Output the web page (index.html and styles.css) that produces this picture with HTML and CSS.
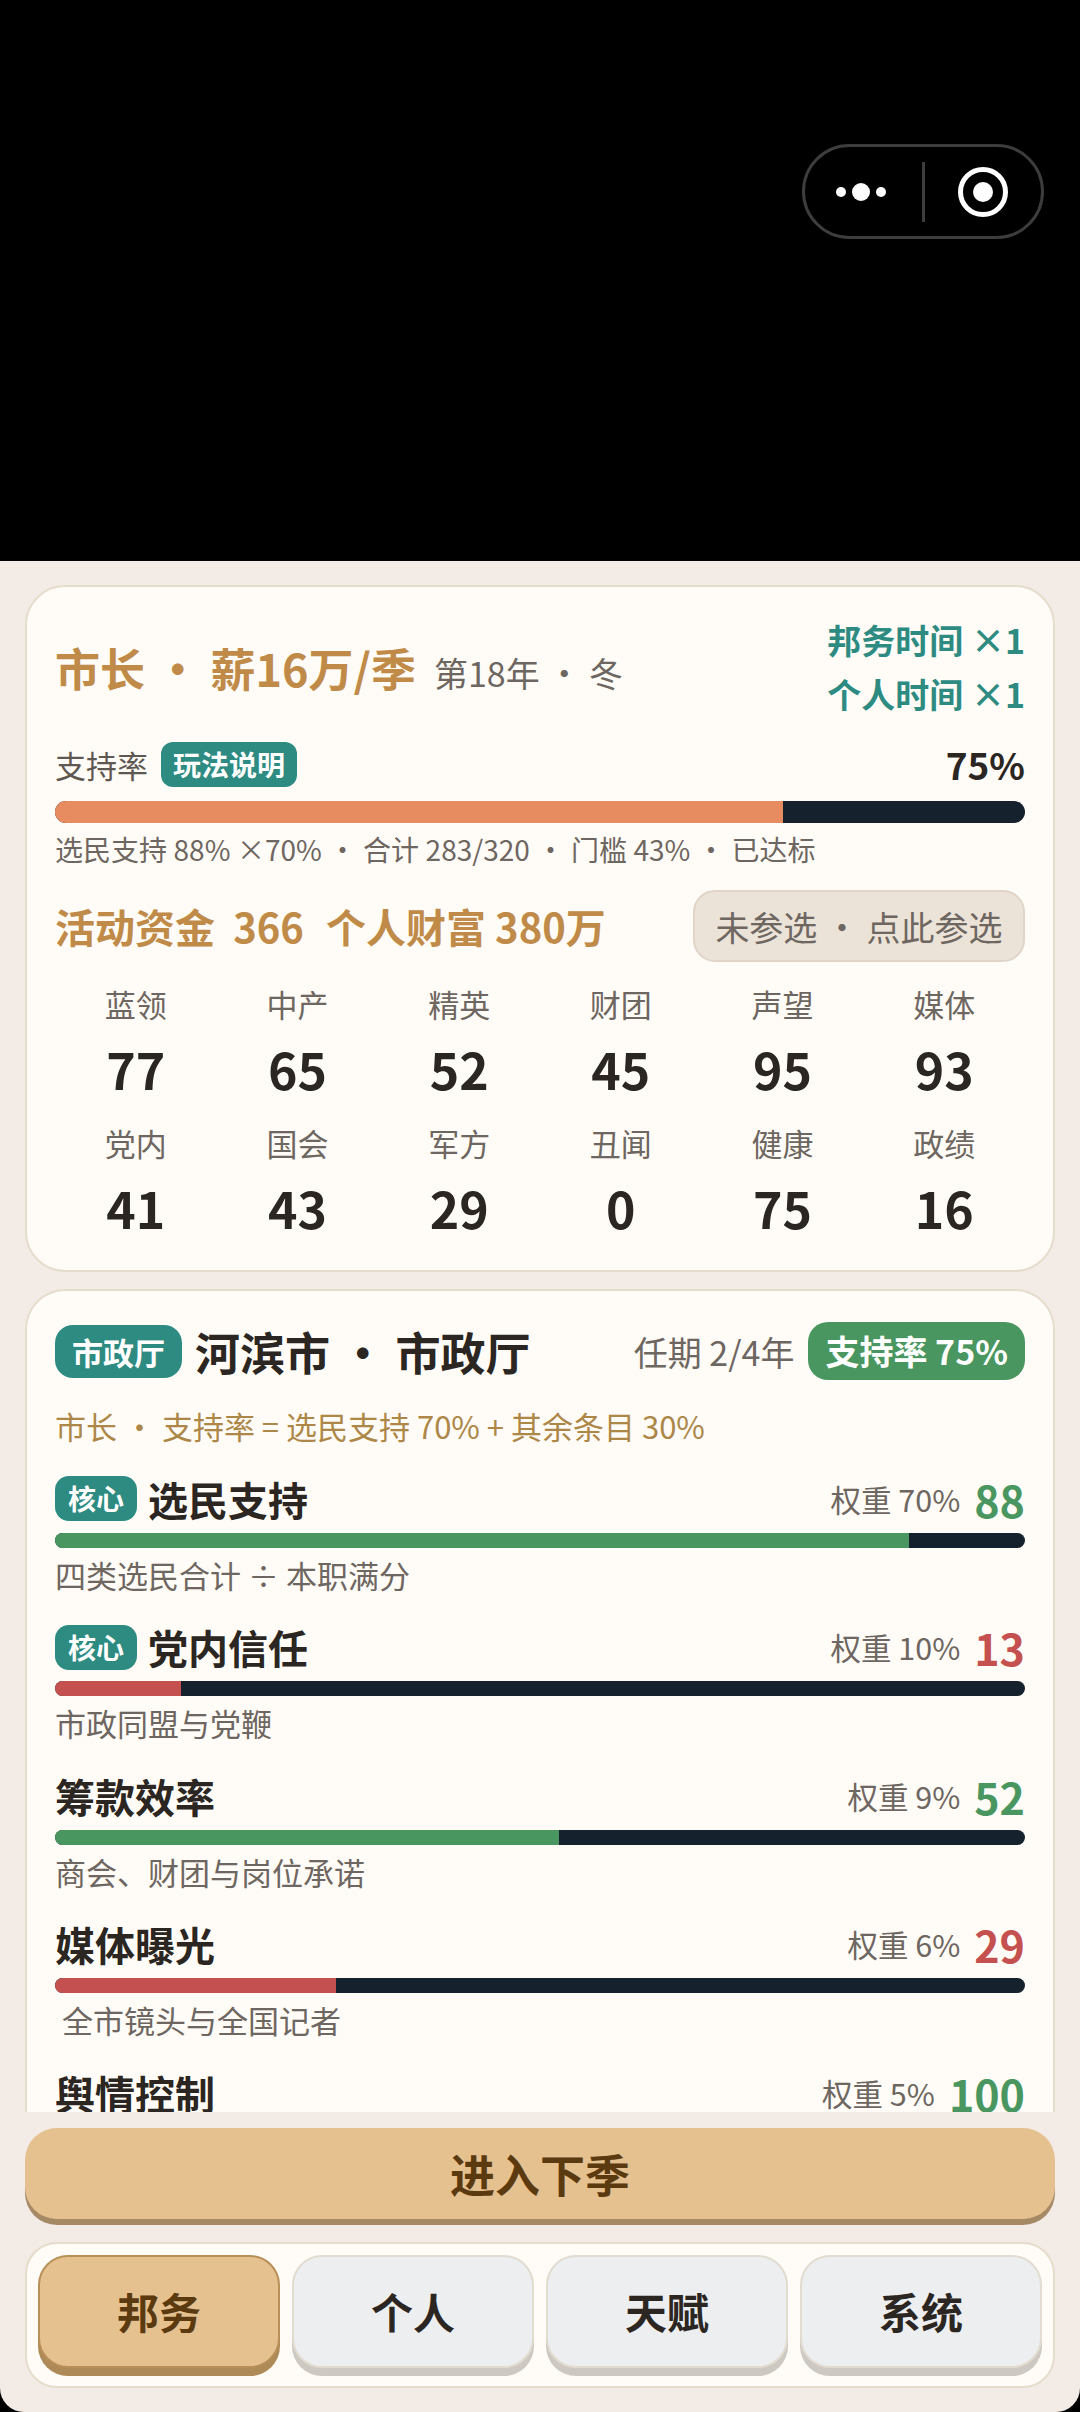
FILE: index.html
```html
<!DOCTYPE html>
<html lang="zh-CN">
<head>
<meta charset="utf-8">
<title>市长</title>
<link rel="stylesheet" href="styles.css">
</head>
<body>
<div class="app">
  <header class="top">
    <div class="capsule">
      <div class="cap-more"><i class="d"></i><i class="d big"></i><i class="d"></i></div>
      <div class="cap-sep"></div>
      <div class="cap-close"><svg width="50" height="50" viewBox="0 0 50 50"><circle cx="25" cy="25" r="22.5" fill="none" stroke="#fff" stroke-width="5"/><circle cx="25" cy="25" r="10" fill="#fff"/></svg></div>
    </div>
  </header>
  <main class="scroll">
    <section class="card hero">
      <div class="hero-head">
        <div class="title"><span class="t-main">市长 · 薪16万/季</span><span class="t-sub">第18年 · 冬</span></div>
        <div class="times"><div>邦务时间 ×1</div><div>个人时间 ×1</div></div>
      </div>
      <div class="sup-row">
        <span class="sup-label">支持率</span><span class="chip-help">玩法说明</span><span class="sup-val">75%</span>
      </div>
      <div class="bar bar-big"><div class="fill orange" style="width:75%"></div></div>
      <div class="note">选民支持 88% ×70% · 合计 283/320 · 门槛 43% · 已达标</div>
      <div class="fund-row">
        <div class="funds"><span>活动资金&nbsp; 366</span><span>个人财富 380万</span></div>
        <div class="join">未参选 · 点此参选</div>
      </div>
      <div class="stats">
        <div class="stat"><span>蓝领</span><b>77</b></div>
        <div class="stat"><span>中产</span><b>65</b></div>
        <div class="stat"><span>精英</span><b>52</b></div>
        <div class="stat"><span>财团</span><b>45</b></div>
        <div class="stat"><span>声望</span><b>95</b></div>
        <div class="stat"><span>媒体</span><b>93</b></div>
        <div class="stat"><span>党内</span><b>41</b></div>
        <div class="stat"><span>国会</span><b>43</b></div>
        <div class="stat"><span>军方</span><b>29</b></div>
        <div class="stat"><span>丑闻</span><b>0</b></div>
        <div class="stat"><span>健康</span><b>75</b></div>
        <div class="stat"><span>政绩</span><b>16</b></div>
      </div>
    </section>
    <section class="card office">
      <div class="office-head">
        <span class="chip-office">市政厅</span>
        <span class="office-name">河滨市 · 市政厅</span>
        <span class="term">任期 2/4年</span>
        <span class="chip-sup">支持率 75%</span>
      </div>
      <div class="formula">市长 · 支持率 = 选民支持 70% + 其余条目 30%</div>
      <div class="metric">
        <div class="m-head"><span class="chip-core">核心</span><span class="m-name">选民支持</span><span class="m-weight">权重 70%</span><span class="m-val green">88</span></div>
        <div class="bar"><div class="fill bg-green" style="width:88%"></div></div>
        <div class="m-note">四类选民合计 ÷ 本职满分</div>
      </div>
      <div class="metric">
        <div class="m-head"><span class="chip-core">核心</span><span class="m-name">党内信任</span><span class="m-weight">权重 10%</span><span class="m-val red">13</span></div>
        <div class="bar"><div class="fill bg-red" style="width:13%"></div></div>
        <div class="m-note">市政同盟与党鞭</div>
      </div>
      <div class="metric">
        <div class="m-head"><span class="m-name">筹款效率</span><span class="m-weight">权重 9%</span><span class="m-val green">52</span></div>
        <div class="bar"><div class="fill bg-green" style="width:52%"></div></div>
        <div class="m-note">商会、财团与岗位承诺</div>
      </div>
      <div class="metric">
        <div class="m-head"><span class="m-name">媒体曝光</span><span class="m-weight">权重 6%</span><span class="m-val red">29</span></div>
        <div class="bar"><div class="fill bg-red" style="width:29%"></div></div>
        <div class="m-note">&nbsp;全市镜头与全国记者</div>
      </div>
      <div class="metric">
        <div class="m-head"><span class="m-name">舆情控制</span><span class="m-weight">权重 5%</span><span class="m-val green">100</span></div>
      </div>
    </section>
  </main>
  <footer class="foot">
    <button class="next">进入下季</button>
    <nav class="tabs">
      <div class="tab active">邦务</div>
      <div class="tab">个人</div>
      <div class="tab">天赋</div>
      <div class="tab">系统</div>
    </nav>
  </footer>
</div>
</body>
</html>
```
FILE: styles.css
```css
* { box-sizing: border-box; margin: 0; padding: 0; }
html, body { width: 1080px; height: 2412px; background: #000; overflow: hidden; }
body { font-family: "Noto Sans CJK SC", "Noto Sans", sans-serif; color: #2b2622; }
.app { width: 1080px; height: 2412px; display: flex; flex-direction: column; background: #f3ece6; border-radius: 0 0 24px 24px; overflow: hidden; }
.top { height: 561px; flex: none; background: #000; display: flex; justify-content: flex-end; align-items: flex-start; padding: 144px 36px 0 0; }
.capsule { width: 242px; height: 95px; border: 3px solid #3d3d3d; border-radius: 48px; display: flex; align-items: center; }
.cap-more { width: 117px; display: flex; align-items: center; justify-content: center; gap: 6px; padding-right: 5px; }
.d { width: 10px; height: 10px; border-radius: 50%; background: #fff; display: block; }
.d.big { width: 18px; height: 18px; }
.cap-sep { width: 3px; height: 60px; background: #3d3d3d; }
.cap-close { flex: 1; display: flex; align-items: center; justify-content: center; }

.scroll { height: 1551px; flex: none; overflow: hidden; padding: 24px 25px 0; display: flex; flex-direction: column; gap: 17px; }
.card { background: #fffcf7; border: 2px solid #e6dccb; border-radius: 40px; padding: 0 28px; flex: none; }

.hero { height: 687px; }
.hero-head { height: 136px; display: flex; justify-content: space-between; align-items: center; padding-top: 25px; }
.title { display: flex; align-items: baseline; }
.t-main { font-size: 45px; font-weight: 700; color: #c08b49; }
.t-sub { font-size: 34px; color: #6e6660; margin-left: 18px; }
.times { font-size: 34px; font-weight: 700; color: #2e8b82; text-align: right; line-height: 54px; padding-bottom: 1px; }
.sup-row { display: flex; align-items: center; height: 46px; margin-top: 18px; }
.sup-label { font-size: 31px; color: #5f5852; }
.chip-help { background: #2e8b82; color: #fff; font-size: 28px; font-weight: 700; border-radius: 12px; padding: 0 12px; margin-left: 13px; height: 45px; line-height: 45px; }
.sup-val { margin-left: auto; font-size: 37px; font-weight: 700; }
.bar { height: 15px; border-radius: 8px; background: #16212e; overflow: hidden; }
.bar-big { height: 22px; border-radius: 11px; margin-top: 14px; }
.fill { height: 100%; }
.orange { background: #e68c60; }
.bg-green { background: #4a9661; }
.bg-red { background: #c4504f; }
.note { font-size: 28px; color: #6e6660; line-height: 40px; margin-top: 6px; word-spacing: 0.3px; }
.fund-row { display: flex; justify-content: space-between; align-items: center; margin-top: 21px; }
.funds { font-size: 40px; font-weight: 700; color: #c08b49; display: flex; gap: 22px; }
.join { width: 332px; height: 72px; border: 2px solid #e0d5c8; border-radius: 22px; background: #ebe2d8; color: #6e6660; font-size: 34px; display: flex; align-items: center; justify-content: center; }
.stats { display: grid; grid-template-columns: repeat(6, 1fr); margin-top: 20px; }
.stat { display: flex; flex-direction: column; align-items: center; height: 138.5px; }
.stat span { font-size: 31px; color: #6e6660; line-height: 44px; }
.stat b { font-size: 50px; line-height: 68px; margin-top: 8px; font-weight: 700; }

.office { flex: 1 0 auto; border-bottom: 0; border-radius: 40px 40px 0 0; padding-top: 31px; }
.office-head { display: flex; align-items: center; height: 58px; }
.chip-office { background: #2e8b82; color: #fff; font-size: 31px; font-weight: 700; border-radius: 18px; height: 53px; line-height: 53px; padding: 0 17px; }
.office-name { font-size: 45px; font-weight: 700; margin-left: 13px; }
.term { font-size: 34px; color: #6e6660; margin-left: auto; }
.chip-sup { background: #4a9661; color: #fff; font-size: 34px; font-weight: 700; border-radius: 20px; height: 58px; line-height: 58px; padding: 0 17px; margin-left: 14px; }
.formula { font-size: 31px; color: #ad8748; line-height: 44px; margin-top: 24px; }
.metric { height: 148.5px; }
.formula + .metric { margin-top: 27.5px; }
.m-head { display: flex; align-items: center; height: 46px; }
.chip-core { background: #2e8b82; color: #fff; font-size: 28px; font-weight: 700; border-radius: 14px; height: 45px; line-height: 45px; padding: 0 13px; margin-right: 11px; }
.m-name { font-size: 40px; font-weight: 700; }
.m-weight { font-size: 30.5px; color: #6e6660; margin-left: auto; }
.m-val { font-size: 43px; font-weight: 700; margin-left: 14px; }
.green { color: #4a9661; }
.red { color: #c4504f; }
.m-head + .bar { margin-top: 11px; }
.m-note { font-size: 31px; color: #6e6660; line-height: 44px; margin-top: 5px; }

.foot { flex: 1; padding: 16px 25px 0; display: flex; flex-direction: column; gap: 23px; }
.next { height: 91px; flex: none; border: 0; border-radius: 32px; background: #e5c190; box-shadow: 0 6px 0 #a68a66; font-family: inherit; font-size: 45px; font-weight: 700; color: #5c3a10; }
.tabs { height: 146px; background: #fffcf7; border: 2px solid #e6dccb; border-radius: 32px; padding: 11px 11px 0; display: grid; grid-template-columns: repeat(4, 1fr); gap: 12px; align-items: start; }
.tab { height: 113px; border: 2px solid #e2dbd0; border-radius: 30px; background: #edeef0; box-shadow: 0 8px 0 #cdc8c2; padding-bottom: 2px; font-size: 42px; font-weight: 700; display: flex; align-items: center; justify-content: center; }
.tab.active { background: #e5c190; border-color: #b88f57; box-shadow: 0 8px 0 #ad8a57; color: #5c3a10; }
```
